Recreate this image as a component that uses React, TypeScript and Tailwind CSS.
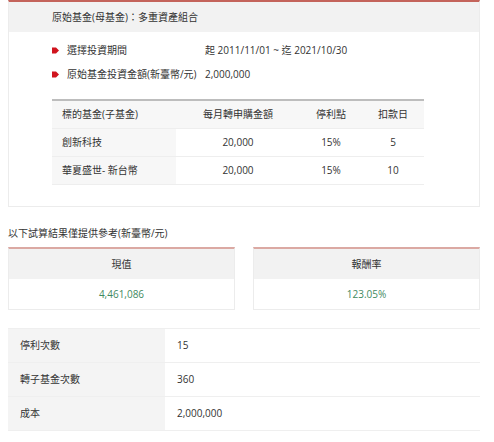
import React from 'react';

const font = { fontFamily: '"Open Sans", "Noto Sans CJK TC", sans-serif' };

const Bullet = () => (
  <svg width="7" height="7" viewBox="0 0 7 7" className="shrink-0">
    <polygon points="0,0.5 4,0.5 7,3.5 4,6.5 0,6.5" fill="#d0141e" />
  </svg>
);

const subFunds = [
  { name: '創新科技', amount: '20,000', stop: '15%', day: '5' },
  { name: '華夏盛世- 新台幣', amount: '20,000', stop: '15%', day: '10' },
];

const stats = [
  { label: '停利次數', value: '15' },
  { label: '轉子基金次數', value: '360' },
  { label: '成本', value: '2,000,000' },
];

export default function App() {
  return (
    <div className="w-[494px] h-[442px] bg-white pl-2 pr-[14px] text-[10px] text-[#333]" style={font}>
      {/* Parent fund panel */}
      <div className="border-t-2 border-[#c4645b] border-x border-b border-x-[#ececec] border-b-[#ececec]">
        <div className="h-[30px] bg-[#f2f2f2] flex items-center pl-[43px]">原始基金(母基金)：多重資產組合</div>
        <div className="pt-[6px] pb-[21px] px-[43px]">
          <div className="h-6 flex items-center">
            <Bullet />
            <span className="ml-2 w-[138px]">選擇投資期間</span>
            <span>起 2011/11/01 ~ 迄 2021/10/30</span>
          </div>
          <div className="h-6 flex items-center">
            <Bullet />
            <span className="ml-2 w-[138px]">原始基金投資金額(新臺幣/元)</span>
            <span>2,000,000</span>
          </div>

          <div className="mt-[13px] w-[372px] border-t-2 border-[#bdbdbd]">
            <div className="flex h-[28px] items-center bg-[#f7f7f7] border-b border-[#eee]">
              <div className="w-[124px] pl-[10px]">標的基金(子基金)</div>
              <div className="w-[124px] text-center">每月轉申購金額</div>
              <div className="w-[62px] text-center">停利點</div>
              <div className="w-[62px] text-center">扣款日</div>
            </div>
            {subFunds.map((f) => (
              <div key={f.name} className="flex h-[28px] items-stretch border-b border-[#eee]">
                <div className="w-[124px] pl-[10px] bg-[#f7f7f7] flex items-center">{f.name}</div>
                <div className="w-[124px] flex items-center justify-center">{f.amount}</div>
                <div className="w-[62px] flex items-center justify-center">{f.stop}</div>
                <div className="w-[62px] flex items-center justify-center">{f.day}</div>
              </div>
            ))}
          </div>
        </div>
      </div>

      <p className="mt-[17px] leading-[18px]">以下試算結果僅提供參考(新臺幣/元)</p>

      {/* Result cards */}
      <div className="mt-[5px] flex gap-[18px]">
        {[
          { label: '現值', value: '4,461,086' },
          { label: '報酬率', value: '123.05%' },
        ].map((c) => (
          <div key={c.label} className="flex-1 border-t-2 border-[#dba9a3] border-x border-b border-x-[#ececec] border-b-[#ececec]">
            <div className="h-[30px] bg-[#f2f2f2] flex items-center justify-center">{c.label}</div>
            <div className="h-[30px] flex items-center justify-center text-[#3f8a5f]">{c.value}</div>
          </div>
        ))}
      </div>

      {/* Summary table */}
      <div className="mt-[18px] border-t border-[#efefef]">
        {stats.map((s) => (
          <div key={s.label} className="flex h-[34px] border-b border-[#efefef]">
            <div className="w-[157px] bg-[#f4f4f4] pl-3 flex items-center">{s.label}</div>
            <div className="flex-1 pl-3 flex items-center">{s.value}</div>
          </div>
        ))}
      </div>
    </div>
  );
}
